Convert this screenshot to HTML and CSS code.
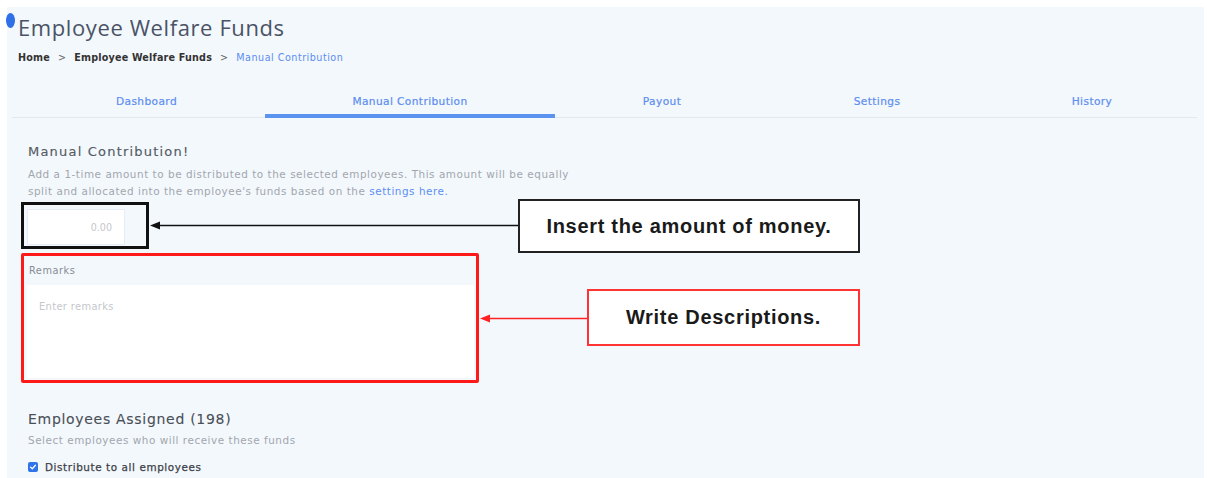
FILE: index.html
```html
<!DOCTYPE html>
<html lang="en">
<head>
<meta charset="utf-8">
<title>Employee Welfare Funds</title>
<link rel="stylesheet" href="styles.css">
</head>
<body>
<div class="panel">
  <span class="dot"></span>
  <h1 class="title">Employee Welfare Funds</h1>
  <nav class="crumbs">
    <span class="crumb">Home</span>
    <span class="sep">&gt;</span>
    <span class="crumb">Employee Welfare Funds</span>
    <span class="sep">&gt;</span>
    <span class="crumb current">Manual Contribution</span>
  </nav>

  <div class="tabs">
    <div class="tab">Dashboard</div>
    <div class="tab active">Manual Contribution</div>
    <div class="tab">Payout</div>
    <div class="tab">Settings</div>
    <div class="tab">History</div>
  </div>

  <section class="form">
    <h2 class="heading">Manual Contribution!</h2>
    <div class="desc intro">
      <span class="line">Add a 1-time amount to be distributed to the selected employees. This amount will be equally</span>
      <span class="line">split and allocated into the employee's funds based on the <span class="link">settings here.</span></span>
    </div>

    <div class="amount-wrap">
      <div class="amount">0.00</div>
    </div>

    <div class="remarks-wrap">
      <div class="label">Remarks</div>
      <div class="textarea">Enter remarks</div>
    </div>

    <h2 class="heading assigned">Employees Assigned (198)</h2>
    <p class="desc hint">Select employees who will receive these funds</p>
    <label class="check">
      <span class="box">
        <svg viewBox="0 0 10 10" width="8" height="8"><path d="M2 5.2 L4.2 7.2 L8 2.8" fill="none" stroke="#fff" stroke-width="1.6" stroke-linecap="round" stroke-linejoin="round"/></svg>
      </span>
      Distribute to all employees
    </label>
  </section>

  <!-- callouts drawn on top of the form -->
  <div class="hl hl-amount"></div>
  <div class="hl hl-remarks"></div>
  <div class="note note-amount">Insert the amount of money.</div>
  <div class="note note-remarks">Write Descriptions.</div>
  <svg class="arrows" width="1207" height="478" viewBox="0 0 1207 478">
    <line x1="518" y1="225.5" x2="158" y2="225.5" stroke="#111" stroke-width="1.4"/>
    <polygon points="150,225.5 160,221.5 160,229.5" fill="#111"/>
    <line x1="587" y1="318.5" x2="488" y2="318.5" stroke="#f22" stroke-width="1.4"/>
    <polygon points="480,318.5 490,314.5 490,322.5" fill="#f22"/>
  </svg>
</div>
</body>
</html>
```

FILE: styles.css
```css
html, body {
  margin: 0;
  padding: 0;
  background: #ffffff;
}

body {
  width: 1207px;
  height: 478px;
  overflow: hidden;
  font-family: "DejaVu Sans", "Open Sans", sans-serif;
}

.panel {
  position: relative;
  margin: 7px 3px 0 7px;
  height: 480px;
  background: #f3f8fd;
  padding: 6px 0 0 11px;
  box-sizing: border-box;
}

.dot {
  position: absolute;
  left: -1px;
  top: 6px;
  width: 9px;
  height: 15px;
  border-radius: 50%;
  background: #2f6fe8;
}

.title {
  margin: 0;
  font-family: "Open Sans", sans-serif;
  font-size: 22px;
  font-weight: 400;
  color: #4a5366;
  line-height: 28px;
  letter-spacing: 0.6px;
}

.crumbs {
  margin-top: 10px;
  display: flex;
  align-items: center;
  gap: 8px;
  font-size: 9.6px;
  line-height: 14px;
  font-weight: 700;
  letter-spacing: 0.2px;
  color: #333;
}

.crumbs .sep {
  font-weight: 400;
  color: #666;
}

.crumbs .current {
  font-weight: 400;
  color: #5c8df0;
  letter-spacing: 0.5px;
}

.tabs {
  margin: 22px 0 0 -6px;
  width: 1185px;
  display: grid;
  grid-template-columns: 237px 290px 214px 216px 214px;
  border-bottom: 1px solid #e3e8ef;
  padding-left: 16px;
  box-sizing: border-box;
}

.tab {
  text-align: center;
  font-size: 10.6px;
  font-weight: 400;
  letter-spacing: 0.4px;
  color: #5c8df0;
  -webkit-text-stroke: 0.2px #5c8df0;
  line-height: 14px;
  padding: 7px 0 6px;
  border-bottom: 4px solid transparent;
  margin-bottom: -1px;
}

.tab.active {
  border-bottom-color: #5b93f0;
}

.form {
  padding: 26px 0 0 10px;
}

.heading {
  margin: 0;
  font-size: 13px;
  font-weight: 400;
  letter-spacing: 1.2px;
  color: #555b63;
  -webkit-text-stroke: 0.15px #555b63;
  line-height: 16px;
}

.desc {
  margin: 6px 0 0;
  font-size: 10.4px;
  letter-spacing: 0.55px;
  line-height: 17px;
  color: #a2a6ad;
}

.intro {
  display: flex;
  flex-direction: column;
  align-items: flex-start;
}

.link {
  color: #5c8df0;
}

.amount-wrap {
  margin-top: 9px;
  width: 98px;
  height: 36px;
  background: #ffffff;
  border: 1px solid #e6edf6;
  box-sizing: border-box;
  display: flex;
  align-items: center;
  justify-content: flex-end;
  padding-right: 12px;
  margin-left: -1px;
}

.amount {
  font-size: 9.6px;
  color: #c4c7cc;
}

.remarks-wrap {
  margin-top: 12px;
  width: 447px;
  margin-left: -1px;
}

.label {
  font-size: 9.8px;
  letter-spacing: 0.5px;
  color: #888c93;
  line-height: 14px;
  padding: 7px 0 7px 2px;
}

.textarea {
  height: 93px;
  background: #ffffff;
  box-sizing: border-box;
  padding: 16px 12px 0;
  font-size: 9.8px;
  letter-spacing: 0.4px;
  color: #c4c7cc;
}

.assigned {
  margin-top: 33px;
  font-size: 14px;
  letter-spacing: 0.7px;
  color: #4a4f57;
  -webkit-text-stroke: 0.1px #4a4f57;
}

.hint {
  margin-top: 5px;
}

.check {
  margin-top: 12px;
  display: flex;
  align-items: center;
  gap: 7px;
  font-size: 10.4px;
  letter-spacing: 0.6px;
  font-weight: 400;
  color: #3d4148;
  -webkit-text-stroke: 0.25px #3d4148;
}

.box {
  width: 10px;
  height: 10px;
  border-radius: 2px;
  background: #2f74e8;
  display: flex;
  align-items: center;
  justify-content: center;
}

/* callout frames and notes */
.hl {
  position: absolute;
  box-sizing: border-box;
}

.hl-amount {
  left: 14px;
  top: 195px;
  width: 128px;
  height: 47px;
  border: 3px solid #111;
}

.hl-remarks {
  left: 14px;
  top: 246px;
  width: 458px;
  height: 130px;
  border: 3px solid #ff1a1a;
  border-radius: 2px;
}

.note {
  position: absolute;
  box-sizing: border-box;
  background: #ffffff;
  display: flex;
  align-items: center;
  justify-content: center;
  font-family: "Liberation Sans", Arial, sans-serif;
  font-weight: 700;
  font-size: 20px;
  letter-spacing: 0.7px;
  color: #1a1a1a;
}

.note-amount {
  left: 511px;
  top: 192px;
  width: 342px;
  height: 54px;
  border: 2px solid #222;
}

.note-remarks {
  left: 580px;
  top: 282px;
  width: 273px;
  height: 57px;
  border: 2px solid #f33;
}

.arrows {
  position: absolute;
  left: -7px;
  top: -7px;
  pointer-events: none;
}
```
